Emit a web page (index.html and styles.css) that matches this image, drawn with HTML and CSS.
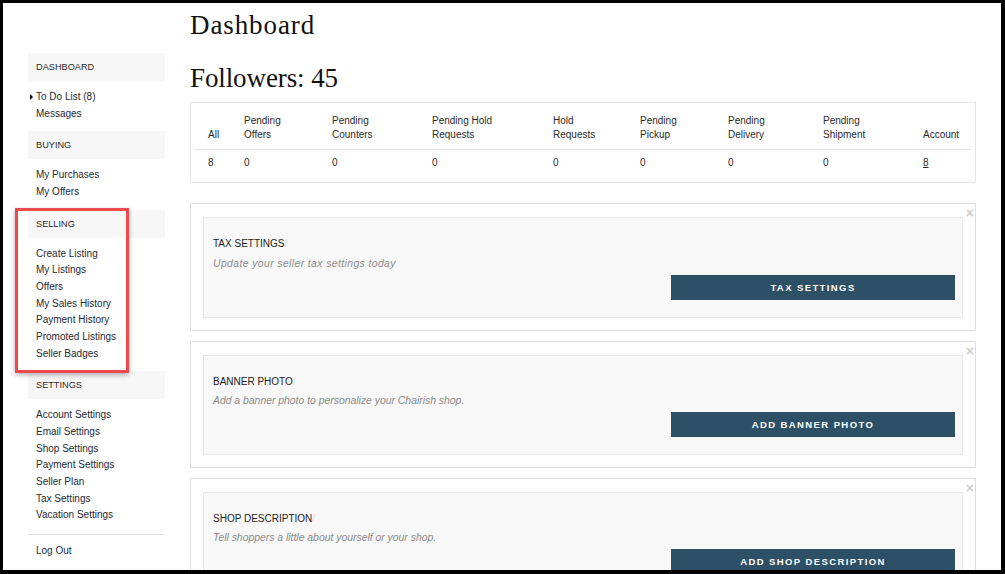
FILE: index.html
```html
<!DOCTYPE html>
<html lang="en">
<head>
    <meta charset="UTF-8">
    <meta name="viewport" content="width=device-width, initial-scale=1.0">
    <title>Dashboard</title>
    <link rel="stylesheet" href="styles.css">
</head>
<body>
    <div class="frame">
        <aside class="sidebar">
            <div class="nav-head">Dashboard</div>
            <ul class="nav-list">
                <li class="current">To Do List (8)</li>
                <li>Messages</li>
            </ul>
            <div class="nav-head">Buying</div>
            <ul class="nav-list">
                <li>My Purchases</li>
                <li>My Offers</li>
            </ul>
            <div class="nav-head">Selling</div>
            <ul class="nav-list">
                <li>Create Listing</li>
                <li>My Listings</li>
                <li>Offers</li>
                <li>My Sales History</li>
                <li>Payment History</li>
                <li>Promoted Listings</li>
                <li>Seller Badges</li>
            </ul>
            <div class="nav-head">Settings</div>
            <ul class="nav-list">
                <li>Account Settings</li>
                <li>Email Settings</li>
                <li>Shop Settings</li>
                <li>Payment Settings</li>
                <li>Seller Plan</li>
                <li>Tax Settings</li>
                <li>Vacation Settings</li>
            </ul>
            <ul class="nav-list logout">
                <li>Log Out</li>
            </ul>
        </aside>

        <main class="content">
            <h1 class="page-title">Dashboard</h1>
            <h2 class="followers">Followers: 45</h2>

            <div class="stats-box">
                <table class="stats">
                    <thead>
                        <tr>
                            <th>All</th>
                            <th>Pending<br>Offers</th>
                            <th>Pending<br>Counters</th>
                            <th>Pending Hold<br>Requests</th>
                            <th>Hold<br>Requests</th>
                            <th>Pending<br>Pickup</th>
                            <th>Pending<br>Delivery</th>
                            <th>Pending<br>Shipment</th>
                            <th>Account</th>
                        </tr>
                    </thead>
                    <tbody>
                        <tr>
                            <td>8</td>
                            <td>0</td>
                            <td>0</td>
                            <td>0</td>
                            <td>0</td>
                            <td>0</td>
                            <td>0</td>
                            <td>0</td>
                            <td><a href="#">8</a></td>
                        </tr>
                    </tbody>
                </table>
            </div>

            <div class="card">
                <span class="close">&times;</span>
                <div class="card-inner">
                    <div class="card-title">Tax Settings<span class="slash">/</span></div>
                    <div class="card-text wide">Update your seller tax settings today</div>
                    <div class="card-actions"><button class="btn">Tax Settings</button></div>
                </div>
            </div>

            <div class="card">
                <span class="close">&times;</span>
                <div class="card-inner">
                    <div class="card-title">Banner Photo<span class="slash">/</span></div>
                    <div class="card-text">Add a banner photo to personalize your Chairish shop.</div>
                    <div class="card-actions"><button class="btn">Add Banner Photo</button></div>
                </div>
            </div>

            <div class="card">
                <span class="close">&times;</span>
                <div class="card-inner">
                    <div class="card-title">Shop Description<span class="slash">/</span></div>
                    <div class="card-text">Tell shoppers a little about yourself or your shop.</div>
                    <div class="card-actions"><button class="btn">Add Shop Description</button></div>
                </div>
            </div>
        </main>

        <!-- marca roja de la captura -->
        <div class="highlight"></div>
    </div>
</body>
</html>
```

FILE: styles.css
```css
/* Estilos generales */
body {
    margin: 0;
    padding: 0;
    background-color: #000;
    font-family: "Liberation Sans", Arial, sans-serif;
    color: #2a2a2a;
}

.frame {
    position: relative;
    box-sizing: border-box;
    width: 1005px;
    height: 574px;
    border: 3px solid #000;
    border-right-width: 4px;
    border-bottom-width: 4px;
    background-color: #fff;
    display: flex;
    align-items: flex-start;
    overflow: hidden;
}

/* Barra lateral */
.sidebar {
    width: 137px;
    margin-left: 25px;
    margin-top: 50px;
    flex-shrink: 0;
}

.nav-head {
    height: 28px;
    line-height: 28px;
    padding-left: 8px;
    background-color: #f7f7f7;
    font-size: 9.2px;
    text-transform: uppercase;
    color: #2a2a2a;
}

.nav-list {
    list-style: none;
    margin: 0;
    padding: 8px 0 9px 8px;
}

.nav-list li {
    position: relative;
    font-size: 10px;
    line-height: 16.67px;
    color: #262a33;
}

.nav-list li.current::before {
    content: "";
    position: absolute;
    left: -6px;
    top: 5px;
    border-left: 3px solid #000;
    border-top: 3px solid transparent;
    border-bottom: 3px solid transparent;
}

.logout {
    border-top: 1px solid #e5e5e5;
    margin-top: 1px;
}

/* Contenido principal */
.content {
    width: 786px;
    margin-left: 25px;
    padding-top: 6px;
    flex-shrink: 0;
}

.page-title,
.followers {
    margin: 0;
    font-family: "Liberation Serif", "Times New Roman", serif;
    font-weight: normal;
    font-size: 27px;
    line-height: 32px;
    color: #111;
}

.page-title {
    letter-spacing: 0.9px;
}

.followers {
    margin-top: 21px;
    letter-spacing: -0.1px;
}

/* Tabla de pendientes */
.stats-box {
    margin-top: 8px;
    border: 1px solid #e5e5e5;
    padding: 0 4px;
}

.stats {
    width: 100%;
    table-layout: fixed;
    border-collapse: collapse;
    border-spacing: 0;
    font-size: 10px;
}

.stats th {
    font-weight: normal;
    text-align: left;
    vertical-align: bottom;
    line-height: 14px;
    padding: 11px 0 7px;
    border-bottom: 1px solid #e5e5e5;
}

.stats td {
    line-height: 14px;
    padding: 6px 0 12px;
}

.stats th:nth-child(1), .stats td:nth-child(1) { width: 36px; padding-left: 13px; }
.stats th:nth-child(2) { width: 88px; }
.stats th:nth-child(3) { width: 100px; }
.stats th:nth-child(4) { width: 121px; }
.stats th:nth-child(5) { width: 87px; }
.stats th:nth-child(6) { width: 88px; }
.stats th:nth-child(7) { width: 95px; }
.stats th:nth-child(8) { width: 100px; }

.stats a {
    color: #2a2a2a;
}

/* Tarjetas */
.card {
    position: relative;
    margin-top: 10px;
    border: 1px solid #dedede;
    padding: 13px 12px 12px;
}

.stats-box + .card {
    margin-top: 20px;
}

.close {
    position: absolute;
    top: 2px;
    right: 1px;
    font-size: 14px;
    font-weight: bold;
    line-height: 14px;
    color: #cfcfcf;
}

.card-inner {
    background-color: #f8f8f8;
    border: 1px solid #e8e8e8;
    padding: 18px 7px 17px 9px;
}

.card-title {
    font-size: 10px;
    line-height: 16px;
    text-transform: uppercase;
    color: #222;
}

.slash {
    color: #ddd;
}

.card-text {
    margin-top: 3px;
    font-size: 10.4px;
    line-height: 16px;
    font-style: italic;
    color: #8a8a8a;
}

.card-text.wide {
    margin-top: 4px;
    letter-spacing: 0.4px;
}

.card-actions {
    display: flex;
    justify-content: flex-end;
    margin-top: 3px;
}

.btn {
    width: 284px;
    height: 25px;
    border: none;
    padding: 0;
    background-color: #2e5066;
    color: #fff;
    font-family: "Liberation Sans", Arial, sans-serif;
    font-size: 9.5px;
    font-weight: bold;
    letter-spacing: 1.4px;
    text-transform: uppercase;
    cursor: pointer;
}

/* Marca roja */
.highlight {
    position: absolute;
    left: 12px;
    top: 205px;
    width: 108px;
    height: 159px;
    border: 3px solid #ee4a4e;
    box-shadow: 0 2px 5px rgba(0, 0, 0, 0.3);
}
```
